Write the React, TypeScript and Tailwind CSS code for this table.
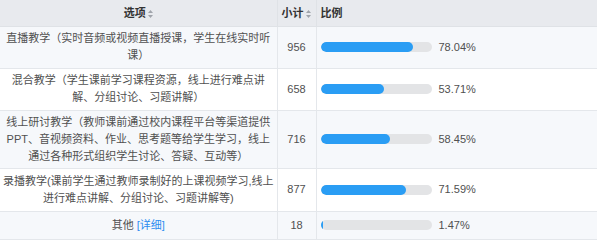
import React from "react";

type Row = {
  label: React.ReactNode;
  count: number;
  pct: number;
  h: string;
  striped: boolean;
};

const rows: Row[] = [
  {
    label: "直播教学（实时音频或视频直播授课，学生在线实时听课）",
    count: 956,
    pct: 78.04,
    h: "h-[42px]",
    striped: true,
  },
  {
    label: "混合教学（学生课前学习课程资源，线上进行难点讲解、分组讨论、习题讲解）",
    count: 658,
    pct: 53.71,
    h: "h-[42px]",
    striped: false,
  },
  {
    label:
      "线上研讨教学（教师课前通过校内课程平台等渠道提供PPT、音视频资料、作业、思考题等给学生学习，线上通过各种形式组织学生讨论、答疑、互动等）",
    count: 716,
    pct: 58.45,
    h: "h-[58px]",
    striped: true,
  },
  {
    label: "录播教学(课前学生通过教师录制好的上课视频学习,线上进行难点讲解、分组讨论、习题讲解等)",
    count: 877,
    pct: 71.59,
    h: "h-[43px]",
    striped: false,
  },
  {
    label: (
      <>
        其他 <a className="text-[#2d8cf0]">[详细]</a>
      </>
    ),
    count: 18,
    pct: 1.47,
    h: "h-[28px]",
    striped: true,
  },
];

const SortIcon = () => (
  <svg width="5" height="8" viewBox="0 0 5 8" className="inline-block ml-[2px] align-[-1px]">
    <path d="M2.5 0L5 3H0z" fill="#a0a4ab" />
    <path d="M2.5 8L5 5H0z" fill="#a0a4ab" />
  </svg>
);

export default function App() {
  return (
    <div
      className="w-[597px] h-[241px] bg-white text-[11px] text-[#505050]"
      style={{ fontFamily: '"Liberation Sans", "Noto Sans CJK SC", sans-serif' }}
    >
      <table className="w-full border-collapse table-fixed">
        <colgroup>
          <col className="w-[277px]" />
          <col className="w-[39px]" />
          <col />
        </colgroup>
        <thead>
          <tr className="h-[26px] bg-[#e8eaee] text-[#333]">
            <th className="border-r border-b border-[#dfe2e6] text-center font-bold">
              选项
              <SortIcon />
            </th>
            <th className="border-r border-b border-[#dfe2e6] text-left pl-[4px] font-bold whitespace-nowrap">
              小计
              <SortIcon />
            </th>
            <th className="border-b border-[#dfe2e6] text-left pl-[4px] font-bold">比例</th>
          </tr>
        </thead>
        <tbody>
          {rows.map((r) => (
            <tr key={r.count} className={`${r.h} ${r.striped ? "bg-[#f6f8fb]" : "bg-white"}`}>
              <td className="border-r border-b border-[#e4e7eb] px-[2px] text-center leading-[17px]">
                {r.label}
              </td>
              <td className="border-r border-b border-[#e4e7eb] text-center">{r.count}</td>
              <td className="border-b border-[#e4e7eb] pl-[4px]">
                <div className="flex items-center gap-[7px]">
                  <div className="w-[111px] h-[10px] rounded-full bg-[#e3e4e6] overflow-hidden">
                    <div
                      className="h-full rounded-full bg-[#2a9df4]"
                      style={{ width: `${Math.max(r.pct * 1.19, 2)}px` }}
                    />
                  </div>
                  <span>{r.pct.toFixed(2)}%</span>
                </div>
              </td>
            </tr>
          ))}
        </tbody>
      </table>
    </div>
  );
}
